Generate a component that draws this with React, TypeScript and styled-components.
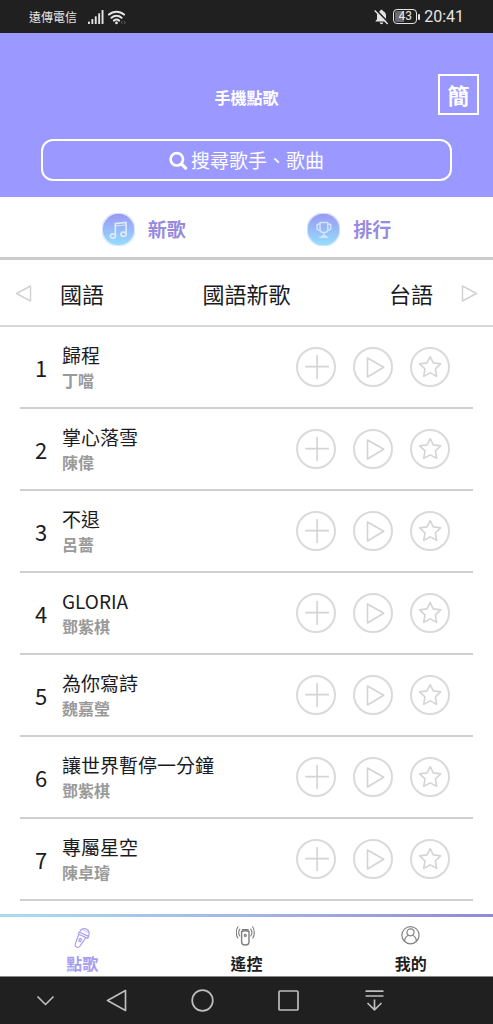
import React from "react";
import styled, { createGlobalStyle } from "styled-components";

const GlobalStyle = createGlobalStyle`
  * { box-sizing: border-box; }
  body {
    margin: 0;
    background: #ffffff;
    color: #1b1b1f;
    font-family: "Noto Sans CJK TC", "Noto Sans", sans-serif;
  }
  button, input { font: inherit; color: inherit; }
  button { padding: 0; border: 0; background: none; cursor: pointer; }
  a { color: inherit; text-decoration: none; }
  svg { display: block; flex: none; }
`;

const Page = styled.div`
  display: flex;
  flex-direction: column;
  min-height: 100vh;
`;

const StatusBar = styled.div`
  display: flex;
  align-items: center;
  justify-content: space-between;
  height: 33px;
  padding: 0 29px;
  background: #202020;
  color: #e4e4e4;
`;

const StatusGroup = styled.div<{ $gap: number }>`
  display: flex;
  align-items: center;
  gap: ${(p) => p.$gap}px;
`;

const Carrier = styled.span`
  font-size: 12px;
  line-height: 16px;
  margin-right: 7px;
`;

const Clock = styled.time`
  font-family: Roboto, sans-serif;
  font-size: 16px;
  line-height: 20px;
`;

const Header = styled.header`
  padding: 41px 14px 16px;
  background: #9b99ff;
  color: #ffffff;
`;

const HeaderRow = styled.div`
  display: grid;
  grid-template-columns: 1fr auto 1fr;
  align-items: center;
`;

const Title = styled.h1`
  grid-column: 2;
  margin: 0;
  padding-top: 4px;
  font-size: 16px;
  line-height: 24px;
  font-weight: 700;
`;

const LanguageButton = styled.button`
  justify-self: end;
  width: 41px;
  height: 41px;
  border: 2px solid #ffffff;
  font-size: 22px;
  line-height: 37px;
  font-weight: 700;
`;

const SearchBox = styled.label`
  display: flex;
  align-items: center;
  justify-content: center;
  gap: 3px;
  height: 42px;
  margin: 24px 27px 0;
  border: 2px solid #ffffff;
  border-radius: 12px;
  cursor: text;
`;

const SearchInput = styled.input`
  field-sizing: content;
  max-width: 80%;
  padding: 0;
  border: 0;
  outline: 0;
  background: transparent;
  font-size: 19px;
  line-height: 28px;
  &::placeholder { color: #ffffff; opacity: 1; }
`;

const Shortcuts = styled.nav`
  display: grid;
  grid-template-columns: 1fr 1fr;
  height: 63px;
  padding: 4px 41px 0;
  border-bottom: 3px solid #cccccc;
`;

const Shortcut = styled.a`
  display: flex;
  align-items: center;
  justify-content: center;
  gap: 13px;
  color: #978be0;
  font-size: 19px;
  line-height: 28px;
  font-weight: 700;
`;

const Categories = styled.nav`
  display: flex;
  align-items: center;
  gap: 28px;
  height: 67px;
  padding: 0 15px;
  border-bottom: 2px solid #d8d8d8;
`;

const CategoryList = styled.div`
  display: flex;
  flex: 1;
  justify-content: space-between;
`;

const Category = styled.button`
  font-size: 22px;
  line-height: 32px;
`;

const SongList = styled.ol`
  flex: 1;
  margin: 0;
  padding: 0 20px 13px;
  list-style: none;
`;

const SongRow = styled.li`
  display: flex;
  align-items: center;
  height: 82px;
  padding-right: 23px;
  border-bottom: 2px solid #d0d0d0;
`;

const SongNumber = styled.span`
  width: 42px;
  text-align: center;
  font-size: 22px;
  line-height: 32px;
`;

const SongText = styled.div`
  flex: 1;
  min-width: 0;
`;

const SongName = styled.div`
  font-size: 19px;
  line-height: 26px;
`;

const Artist = styled.div`
  font-size: 16px;
  line-height: 24px;
  font-weight: 700;
  color: #9a9a9a;
`;

const Actions = styled.div`
  display: flex;
  gap: 17px;
`;

const TabBar = styled.nav`
  position: sticky;
  bottom: 0;
  background: #ffffff;
`;

const TabAccent = styled.div`
  height: 3px;
  background: linear-gradient(90deg, #a9dcf0, #a3b6e4 50%, #9389d8);
`;

const Tabs = styled.div`
  display: grid;
  grid-template-columns: repeat(3, 1fr);
  height: 60px;
  border-bottom: 1px solid #8a8a8a;
`;

const Tab = styled.a<{ $active?: boolean }>`
  display: flex;
  flex-direction: column;
  align-items: center;
  padding-top: 8px;
  gap: 2px;
  color: ${(p) => (p.$active ? "#a79df0" : "#1e1e1e")};
  font-size: 16px;
  line-height: 24px;
  font-weight: 700;
`;

const SystemBar = styled.div`
  display: grid;
  grid-template-columns: 56fr 86fr 86fr 86fr 86fr;
  height: 47px;
  padding: 0 76px 0 18px;
  background: #202020;
`;

const SystemButton = styled.button`
  display: flex;
  align-items: center;
  justify-content: center;
`;

const SignalIcon = () => (
  <svg width="16" height="16" viewBox="0 0 16 16" fill="#e4e4e4" aria-hidden="true">
    <rect x="0" y="12.5" width="1.9" height="2.5" rx=".6" />
    <rect x="3.4" y="10" width="1.9" height="5" rx=".6" />
    <rect x="6.8" y="7.2" width="1.9" height="7.8" rx=".6" />
    <rect x="10.2" y="4.2" width="1.9" height="10.8" rx=".6" />
    <rect x="13.6" y="1" width="1.9" height="14" rx=".6" />
  </svg>
);

const WifiIcon = () => (
  <svg width="18" height="16" viewBox="0 0 18 16" fill="none" stroke="#e4e4e4" strokeWidth="2" aria-hidden="true">
    <path d="M1 5.600a11 11 0 0 1 15 0M3.500 8.700a7.400 7.400 0 0 1 10 0M5.900 11.600a4.200 4.200 0 0 1 5.200 0" strokeLinecap="round" />
    <circle cx="8.500" cy="13.900" r="1.400" fill="#e4e4e4" stroke="none" />
    <path d="m14.500 12.200-1.400 1.300 1.400 1.200m1.500-2.500 1.400 1.300-1.400 1.200" stroke="#777" strokeWidth=".8" />
  </svg>
);

const MuteIcon = () => (
  <svg width="15" height="16" viewBox="0 0 15 16" aria-hidden="true">
    <path d="M7.5.8c.8 0 1.200.5 1.300 1.200 2.100.6 3.200 2.300 3.200 4.500v3.700l1.800 2.300H1.200L3 10.200V6.500C3 4.300 4.100 2.600 6.200 2c.1-.7.5-1.200 1.300-1.200ZM5.800 13.500h3.400c-.2 1.100-.8 1.700-1.700 1.700s-1.500-.6-1.700-1.700Z" fill="#e4e4e4" />
    <path d="m1.800.6 13 13.400" stroke="#202020" strokeWidth="1.600" />
    <path d="m.7 1.500 13 13.400" stroke="#e4e4e4" strokeWidth="1.400" />
  </svg>
);

const Battery = styled.span`
  display: flex;
  align-items: center;
  gap: 1px;
  &::after {
    content: "";
    width: 2px;
    height: 6px;
    border-radius: 1px;
    background: #e4e4e4;
  }
`;

const BatteryLevel = styled.span`
  width: 24px;
  height: 15px;
  border: 1px solid #e4e4e4;
  border-radius: 4px;
  background: linear-gradient(90deg, #6c6c6c 45%, #202020 45%) content-box;
  padding: 1px;
  font-family: Roboto, sans-serif;
  font-size: 12px;
  line-height: 11px;
  text-align: center;
`;

const SearchIcon = () => (
  <svg width="19" height="19" viewBox="0 0 19 19" fill="none" stroke="#fff" aria-hidden="true">
    <circle cx="7.800" cy="8.300" r="6.200" strokeWidth="2.700" />
    <path d="m12.600 13.100 4 4" strokeWidth="3.300" strokeLinecap="round" />
  </svg>
);

const BadgeGradient = ({ id }: { id: string }) => (
  <>
    <defs>
      <linearGradient id={id} x1="0" y1="0" x2="0" y2="1">
        <stop offset="0" stopColor="#9c96f2" />
        <stop offset="1" stopColor="#93e0fd" />
      </linearGradient>
    </defs>
    <circle cx="16.5" cy="16.5" r="16.5" fill={`url(#${id})`} />
  </>
);

const MusicBadge = () => (
  <svg width="33" height="33" viewBox="0 0 33 33" fill="none" stroke="#dce9ff" strokeWidth="1.700" strokeLinejoin="round" aria-hidden="true">
    <BadgeGradient id="music-badge" />
    <path d="M13.300 22.700V10.600l10.800-1.300v12" />
    <path d="M13.300 13.100l10.800-1.200" strokeWidth="1" />
    <ellipse cx="10.900" cy="23" rx="2.500" ry="2.100" />
    <ellipse cx="21.500" cy="21.300" rx="2.600" ry="2.100" />
  </svg>
);

const TrophyBadge = () => (
  <svg width="33" height="33" viewBox="0 0 33 33" fill="none" stroke="#d3e5fd" strokeWidth="1.500" strokeLinejoin="round" aria-hidden="true">
    <BadgeGradient id="trophy-badge" />
    <path d="M13 9.500h7.800v6.900c0 1.800-1.500 3.100-3.900 3.100S13 18.200 13 16.400V9.500Z" />
    <path d="M13 11l-2.900.6v4.600l3 1.500M20.800 11l2.900.6v4.600l-3 1.500" />
    <path d="M16.900 19.600v3.400M12.400 24.200h8.800M14.400 22.900h5" />
  </svg>
);

const ArrowIcon = ({ right }: { right?: boolean }) => (
  <svg width="17" height="18" viewBox="0 0 17 18" fill="none" stroke="#d2d2d2" strokeWidth="1.500" strokeLinejoin="round" aria-hidden="true">
    <path d={right ? "M1.500 2v15L15.500 9.500 1.500 2Z" : "M15.500 2v15L1.500 9.500l14-7.500Z"} />
  </svg>
);

const actionShapes = {
  add: "M9.300 19.600H33M21.100 8v24",
  play: "M14.500 11v19L30.700 20.300 14.500 11Z",
  star: "m20.200 9.600 3.100 6.300 7.400 1-5.300 4.900 1.200 7.600-6.400-3.500-6.500 3.500 1.300-7.600-5.400-4.900 7.400-1 3.200-6.300Z",
};

const ActionIcon = ({ kind }: { kind: keyof typeof actionShapes }) => (
  <svg width="40" height="40" viewBox="0 0 40 40" fill="none" stroke="#d4d4d4" strokeLinejoin="round" aria-hidden="true">
    <circle cx="20" cy="20" r="19" strokeWidth="2" stroke="#dadada" />
    <path d={actionShapes[kind]} strokeWidth="1.600" />
  </svg>
);

const MicIcon = () => (
  <svg width="20" height="24" viewBox="0 0 20 24" fill="none" stroke="#aaa0f0" strokeWidth="1.200" strokeLinejoin="round" aria-hidden="true">
    <path d="M7.700 6.800a4.900 4.900 0 1 1 8.400 4.800" />
    <path d="m7.200 7 9.400 4.400-.9 2-9.400-4.400.9-2Z" />
    <path d="M6.800 9.500 3.200 19.200c-.4 1.400-.1 2.200 1.300 2.900 1.500.7 2.500.5 3.300-.8l5.800-8.500" />
    <path d="m7.900 13.400 1.800.9-1.200 2.500-1.800-.9 1.200-2.500Z" />
    <path d="m10.200 4.400 6.300 3.100" strokeWidth=".7" />
  </svg>
);

const RemoteIcon = () => (
  <svg width="20" height="24" viewBox="0 0 20 24" fill="none" stroke="#7d7d7d" strokeWidth="1.100" strokeLinecap="round" aria-hidden="true">
    <path d="M5.600 6.500c2.300-1 5.200-1 7.400 0v10.300c0 2-1.300 3.200-3.700 3.200s-3.700-1.200-3.700-3.200V6.500Z" strokeWidth="1.400" />
    <path d="M6.500 5.800V4.600h5.600v1.200" />
    <circle cx="9.300" cy="10.400" r="1" />
    <path d="M3.900 4.200C2.500 6 2.500 9 3.800 11M2 1.800C-.3 5.200-.1 10 1.800 13M14.700 4.200c1.400 1.800 1.400 4.800.1 6.800M16.600 1.800c2.300 3.400 2.100 8.200.2 11.200" />
  </svg>
);

const ProfileIcon = () => (
  <svg width="20" height="24" viewBox="0 0 20 24" fill="none" stroke="#858585" strokeWidth="1.200" aria-hidden="true">
    <circle cx="9.500" cy="10.200" r="8.600" />
    <circle cx="9.500" cy="7.300" r="3.500" />
    <path d="M3.600 16.400c.1-3.300 1.700-5.300 4-6.100m3.800 0c2.300.8 3.900 2.800 4 6.100" />
  </svg>
);

const systemShapes = [
  { label: "收起", shape: <path d="m5.500 9.500 8 8 8-8" /> },
  { label: "返回", shape: <path d="M22.500 3.500v20L4.500 13.500l18-10Z" /> },
  { label: "主畫面", shape: <circle cx="13.500" cy="13.500" r="10.300" /> },
  { label: "最近使用", shape: <rect x="4" y="4" width="19" height="19" rx="1" /> },
  { label: "通知", shape: <path d="M4.500 4.200h18M4.500 9h18M13.500 12.500v10M6.500 16l7 6.800 7-6.800" /> },
];

const songs = [
  ["歸程", "丁噹"],
  ["掌心落雪", "陳偉"],
  ["不退", "呂薔"],
  ["GLORIA", "鄧紫棋"],
  ["為你寫詩", "魏嘉瑩"],
  ["讓世界暫停一分鐘", "鄧紫棋"],
  ["專屬星空", "陳卓璿"],
];

export default function App() {
  return (
    <Page>
      <GlobalStyle />
      <StatusBar>
        <StatusGroup $gap={4}>
          <Carrier>遠傳電信</Carrier>
          <SignalIcon />
          <WifiIcon />
        </StatusGroup>
        <StatusGroup $gap={4}>
          <MuteIcon />
          <Battery>
            <BatteryLevel>43</BatteryLevel>
          </Battery>
          <Clock>20:41</Clock>
        </StatusGroup>
      </StatusBar>

      <Header>
        <HeaderRow>
          <Title>手機點歌</Title>
          <LanguageButton type="button">簡</LanguageButton>
        </HeaderRow>
        <SearchBox>
          <SearchIcon />
          <SearchInput type="text" placeholder="搜尋歌手、歌曲" aria-label="搜尋歌手、歌曲" />
        </SearchBox>
      </Header>

      <Shortcuts>
        <Shortcut href="#new">
          <MusicBadge />
          新歌
        </Shortcut>
        <Shortcut href="#ranking">
          <TrophyBadge />
          排行
        </Shortcut>
      </Shortcuts>

      <Categories>
        <button type="button" aria-label="上一類"><ArrowIcon /></button>
        <CategoryList>
          <Category type="button">國語</Category>
          <Category type="button">國語新歌</Category>
          <Category type="button">台語</Category>
        </CategoryList>
        <button type="button" aria-label="下一類"><ArrowIcon right /></button>
      </Categories>

      <SongList>
        {songs.map(([name, artist], index) => (
          <SongRow key={name}>
            <SongNumber>{index + 1}</SongNumber>
            <SongText>
              <SongName>{name}</SongName>
              <Artist>{artist}</Artist>
            </SongText>
            <Actions>
              <button type="button" aria-label={`加入 ${name}`}><ActionIcon kind="add" /></button>
              <button type="button" aria-label={`播放 ${name}`}><ActionIcon kind="play" /></button>
              <button type="button" aria-label={`收藏 ${name}`}><ActionIcon kind="star" /></button>
            </Actions>
          </SongRow>
        ))}
      </SongList>

      <TabBar>
        <TabAccent />
        <Tabs>
          <Tab href="#songs" $active>
            <MicIcon />
            點歌
          </Tab>
          <Tab href="#remote">
            <RemoteIcon />
            遙控
          </Tab>
          <Tab href="#me">
            <ProfileIcon />
            我的
          </Tab>
        </Tabs>
        <SystemBar>
          {systemShapes.map(({ label, shape }) => (
            <SystemButton key={label} type="button" aria-label={label}>
              <svg width="27" height="27" viewBox="0 0 27 27" fill="none" stroke="#bdbdbd" strokeWidth="1.700" strokeLinejoin="round" aria-hidden="true">
                {shape}
              </svg>
            </SystemButton>
          ))}
        </SystemBar>
      </TabBar>
    </Page>
  );
}
